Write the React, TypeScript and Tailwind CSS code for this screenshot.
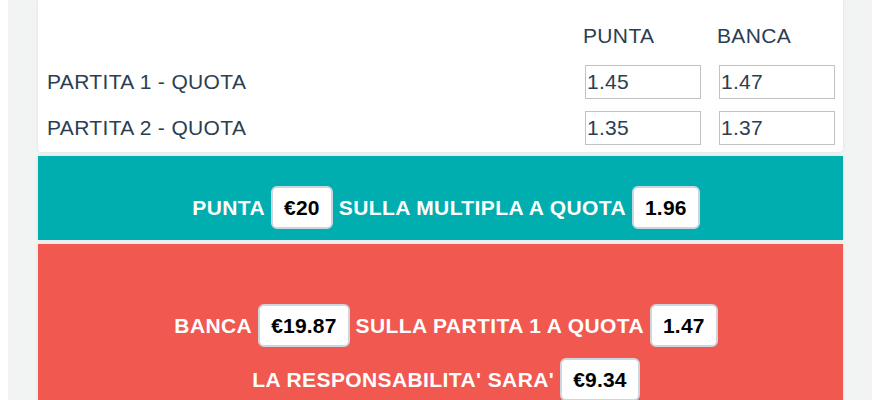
const font = { fontFamily: '"Liberation Sans", Arial, Helvetica, sans-serif' }

function Badge({ children }: { children: React.ReactNode }) {
  return (
    <span className="mx-[6px] inline-flex h-[43px] items-center rounded-md border-2 border-[#cdd5df] bg-white px-[11px] tracking-[0.2px] text-black">
      {children}
    </span>
  )
}

const rows = [
  { label: 'PARTITA 1 - QUOTA', punta: '1.45', banca: '1.47' },
  { label: 'PARTITA 2 - QUOTA', punta: '1.35', banca: '1.37' },
]

export default function App() {
  return (
    <div className="min-h-screen bg-white pl-2" style={font}>
      <div className="min-h-screen w-[864px] bg-[#f2f3f3] pl-[30px] pr-[29px]">
        {/* quote inputs */}
        <div className="rounded-b bg-white pb-[7px] pl-[9px] pr-[8px] pt-[24px] text-[21px] tracking-[0.35px] text-[#2c3e50] shadow-[0_0_3px_rgba(0,0,0,0.1)]">
          <div className="grid grid-cols-[1fr_116px_116px] gap-x-[18px]">
            <div />
            <div className="-ml-[2px] leading-[24px]">PUNTA</div>
            <div className="-ml-[2px] leading-[24px]">BANCA</div>
          </div>
          {rows.map((r, i) => (
            <div
              key={r.label}
              className={`grid grid-cols-[1fr_116px_116px] items-center gap-x-[18px] ${i === 0 ? 'mt-[17px]' : 'mt-[12px]'}`}
            >
              <span>{r.label}</span>
              <input
                readOnly
                value={r.punta}
                className="h-[34px] w-full border border-[#c2c2c2] bg-white px-[1px] text-[21px] tracking-[0.3px] text-[#2c3e50] outline-none"
              />
              <input
                readOnly
                value={r.banca}
                className="h-[34px] w-full border border-[#c2c2c2] bg-white px-[1px] text-[21px] tracking-[0.3px] text-[#2c3e50] outline-none"
              />
            </div>
          ))}
        </div>

        {/* back on the multiple */}
        <div className="mt-[4px] flex items-center justify-center bg-[#00adaf] pb-[11px] pl-[17px] pt-[30px] text-[21px] font-bold tracking-[0.4px] text-white shadow-[0_0_3px_rgba(0,0,0,0.1)]">
          <span>PUNTA</span>
          <Badge>€20</Badge>
          <span>SULLA MULTIPLA A QUOTA</span>
          <Badge>1.96</Badge>
        </div>

        {/* lay on match 1 */}
        <div className="mt-[4px] flex flex-col items-center gap-[11px] bg-[#f05850] pb-[30px] pl-[17px] pt-[60px] text-[21px] font-bold tracking-[0.4px] text-white shadow-[0_0_3px_rgba(0,0,0,0.1)]">
          <div className="flex items-center">
            <span>BANCA</span>
            <Badge>€19.87</Badge>
            <span>SULLA PARTITA 1 A QUOTA</span>
            <Badge>1.47</Badge>
          </div>
          <div className="flex items-center">
            <span>LA RESPONSABILITA' SARA'</span>
            <Badge>€9.34</Badge>
          </div>
        </div>
      </div>
    </div>
  )
}
